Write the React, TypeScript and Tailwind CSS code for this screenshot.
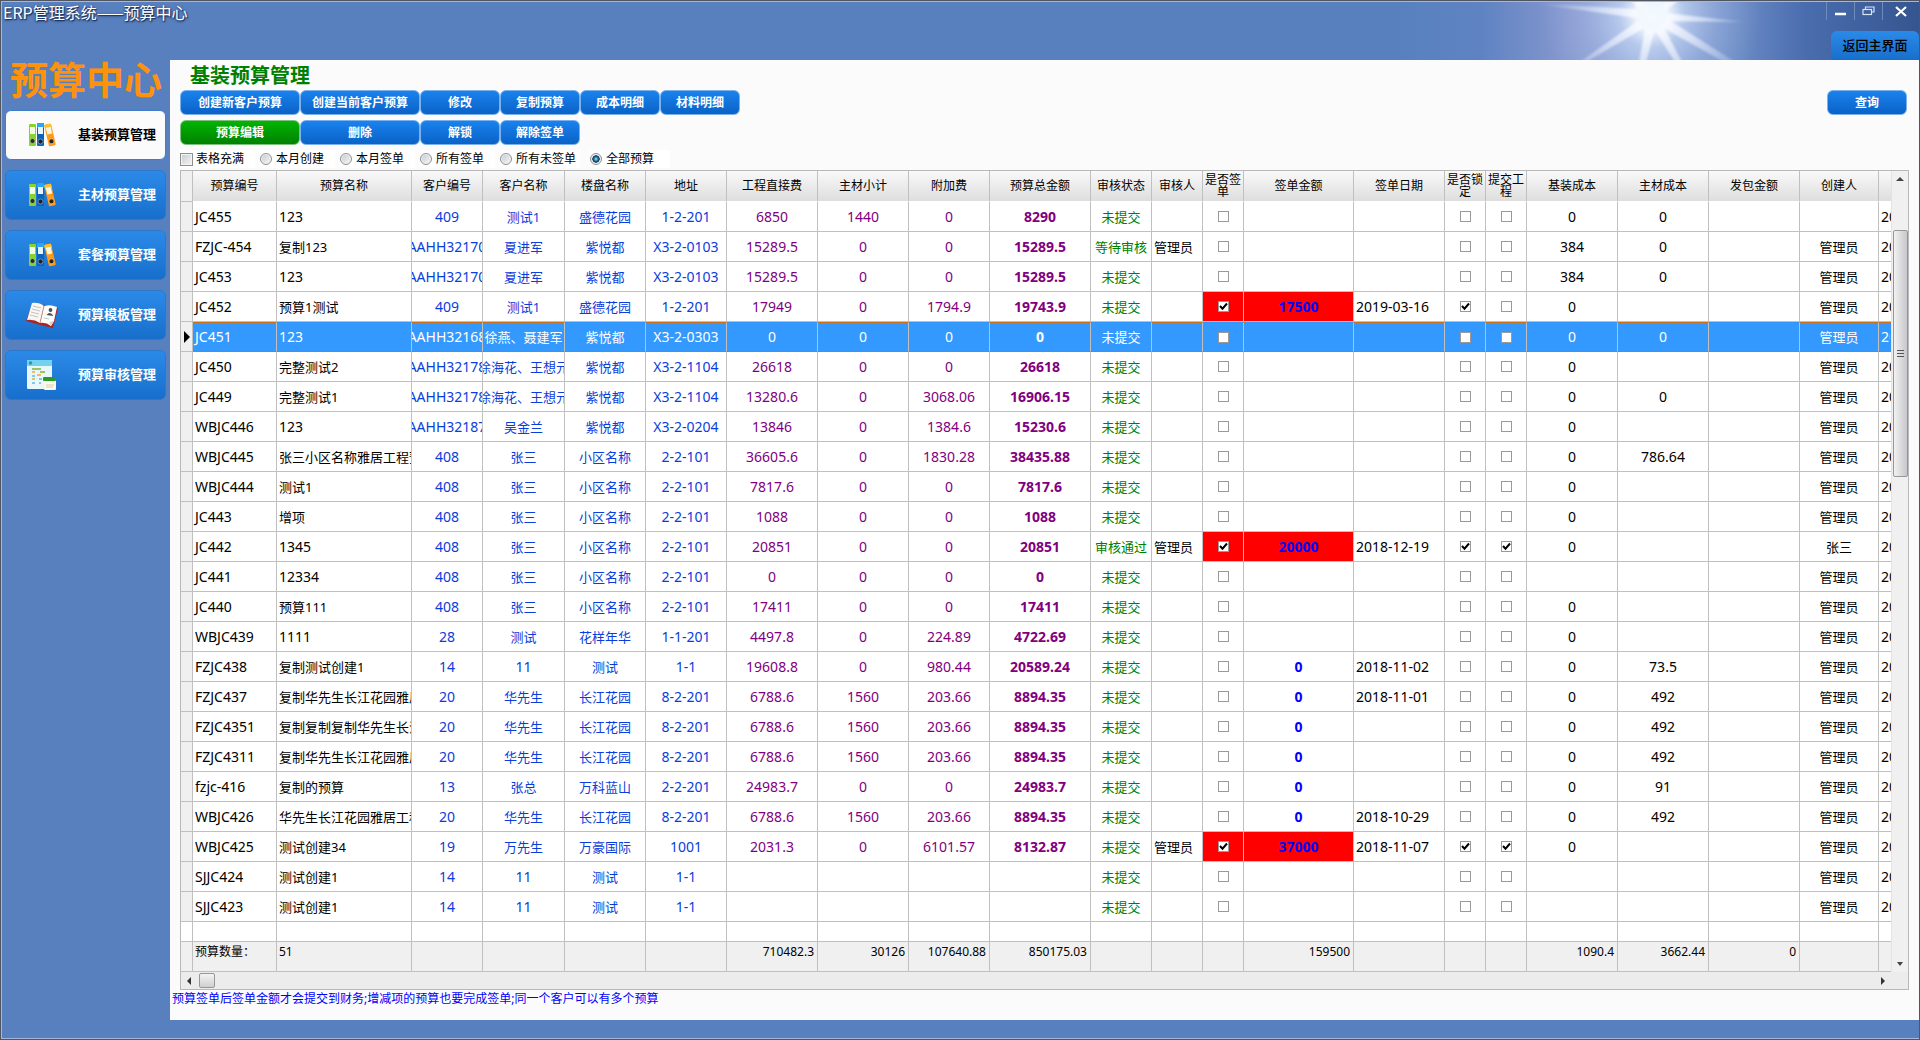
import { useState, type ReactNode } from "react";
import clsx from "clsx";

type Row = {
  id: string;
  name: string;
  customerNo: string;
  customer: string;
  estate: string;
  address: string;
  direct: string;
  material: string;
  extra: string;
  total: string;
  status: string;
  auditor: string;
  signAmount: string;
  signDate: string;
  signed: boolean;
  locked: boolean;
  submitted: boolean;
  baseCost: string;
  materialCost: string;
  creator: string;
};

const LINES = `
JC455|123|409|测试1|盛德花园|1-2-201|6850|1440|0|8290|未提交|||||0|0|
FZJC-454|复制123|AAHH32170|夏进军|紫悦都|X3-2-0103|15289.5|0|0|15289.5|等待审核|管理员||||384|0|管理员
JC453|123|AAHH32170|夏进军|紫悦都|X3-2-0103|15289.5|0|0|15289.5|未提交|||||384|0|管理员
JC452|预算1测试|409|测试1|盛德花园|1-2-201|17949|0|1794.9|19743.9|未提交||17500|2019-03-16|SL|0||管理员
JC451|123|AAHH32168|徐燕、聂建军|紫悦都|X3-2-0303|0|0|0|0|未提交|||||0|0|管理员
JC450|完整测试2|AAHH32178|徐海花、王想元|紫悦都|X3-2-1104|26618|0|0|26618|未提交|||||0||管理员
JC449|完整测试1|AAHH32178|徐海花、王想元|紫悦都|X3-2-1104|13280.6|0|3068.06|16906.15|未提交|||||0|0|管理员
WBJC446|123|AAHH32187|吴金兰|紫悦都|X3-2-0204|13846|0|1384.6|15230.6|未提交|||||0||管理员
WBJC445|张三小区名称雅居工程预算|408|张三|小区名称|2-2-101|36605.6|0|1830.28|38435.88|未提交|||||0|786.64|管理员
WBJC444|测试1|408|张三|小区名称|2-2-101|7817.6|0|0|7817.6|未提交|||||0||管理员
JC443|增项|408|张三|小区名称|2-2-101|1088|0|0|1088|未提交|||||0||管理员
JC442|1345|408|张三|小区名称|2-2-101|20851|0|0|20851|审核通过|管理员|20000|2018-12-19|SLP|0||张三
JC441|12334|408|张三|小区名称|2-2-101|0|0|0|0|未提交|||||||管理员
JC440|预算111|408|张三|小区名称|2-2-101|17411|0|0|17411|未提交|||||0||管理员
WBJC439|1111|28|测试|花样年华|1-1-201|4497.8|0|224.89|4722.69|未提交|||||0||管理员
FZJC438|复制测试创建1|14|11|测试|1-1|19608.8|0|980.44|20589.24|未提交||0|2018-11-02||0|73.5|管理员
FZJC437|复制华先生长江花园雅居|20|华先生|长江花园|8-2-201|6788.6|1560|203.66|8894.35|未提交||0|2018-11-01||0|492|管理员
FZJC4351|复制复制复制华先生长江|20|华先生|长江花园|8-2-201|6788.6|1560|203.66|8894.35|未提交||0|||0|492|管理员
FZJC4311|复制华先生长江花园雅居|20|华先生|长江花园|8-2-201|6788.6|1560|203.66|8894.35|未提交||0|||0|492|管理员
fzjc-416|复制的预算|13|张总|万科蓝山|2-2-201|24983.7|0|0|24983.7|未提交||0|||0|91|管理员
WBJC426|华先生长江花园雅居工程|20|华先生|长江花园|8-2-201|6788.6|1560|203.66|8894.35|未提交||0|2018-10-29||0|492|管理员
WBJC425|测试创建34|19|万先生|万豪国际|1001|2031.3|0|6101.57|8132.87|未提交|管理员|37000|2018-11-07|SLP|0||管理员
SJJC424|测试创建1|14|11|测试|1-1|||||未提交|||||||管理员
SJJC423|测试创建1|14|11|测试|1-1|||||未提交|||||||管理员
`;

const rows: Row[] = LINES.trim().split("\n").map((line) => {
  const f = line.split("|");
  return {
    id: f[0], name: f[1], customerNo: f[2], customer: f[3], estate: f[4], address: f[5],
    direct: f[6], material: f[7], extra: f[8], total: f[9], status: f[10], auditor: f[11],
    signAmount: f[12], signDate: f[13],
    signed: f[14].includes("S"), locked: f[14].includes("L"), submitted: f[14].includes("P"),
    baseCost: f[15], materialCost: f[16], creator: f[17],
  };
});

type Column = {
  key: keyof Row | null;
  title: string;
  width: string;
  tone?: string;
  bold?: boolean;
  left?: boolean;
  sum?: string;
};

const columns: Column[] = [
  { key: "id", title: "预算编号", width: "w-[84px]", left: true, sum: "预算数量：" },
  { key: "name", title: "预算名称", width: "w-[135px]", left: true, sum: "51" },
  { key: "customerNo", title: "客户编号", width: "w-[71px]", tone: "text-[#0a3ddc]" },
  { key: "customer", title: "客户名称", width: "w-[82px]", tone: "text-[#0a3ddc]" },
  { key: "estate", title: "楼盘名称", width: "w-[81px]", tone: "text-[#0a3ddc]" },
  { key: "address", title: "地址", width: "w-[81px]", tone: "text-[#0a3ddc]" },
  { key: "direct", title: "工程直接费", width: "w-[91px]", tone: "text-[#800080]", sum: "710482.3" },
  { key: "material", title: "主材小计", width: "w-[91px]", tone: "text-[#800080]", sum: "30126" },
  { key: "extra", title: "附加费", width: "w-[81px]", tone: "text-[#800080]", sum: "107640.88" },
  { key: "total", title: "预算总金额", width: "w-[101px]", tone: "text-[#800080]", bold: true, sum: "850175.03" },
  { key: "status", title: "审核状态", width: "w-[61px]", tone: "text-[#008000]" },
  { key: "auditor", title: "审核人", width: "w-[51px]", left: true },
  { key: "signed", title: "是否签单", width: "w-[41px]" },
  { key: "signAmount", title: "签单金额", width: "w-[110px]", tone: "text-[#0000ff]", bold: true, sum: "159500" },
  { key: "signDate", title: "签单日期", width: "w-[91px]", left: true },
  { key: "locked", title: "是否锁定", width: "w-[41px]" },
  { key: "submitted", title: "提交工程", width: "w-[41px]" },
  { key: "baseCost", title: "基装成本", width: "w-[91px]", sum: "1090.4" },
  { key: "materialCost", title: "主材成本", width: "w-[91px]", sum: "3662.44" },
  { key: null, title: "发包金额", width: "w-[91px]", sum: "0" },
  { key: "creator", title: "创建人", width: "w-[79px]" },
];

const hasHan = (text: string) => /[\u4e00-\u9fff]/.test(text);

function BinderIcon() {
  return (
    <svg width="30" height="26" viewBox="0 0 30 26" aria-hidden="true">
      <rect x="2" y="2" width="7" height="22" rx="1" fill="#86d32c" />
      <rect x="3" y="5" width="5" height="7" fill="#f3fbe4" />
      <circle cx="5.5" cy="19" r="2.5" fill="#26331c" stroke="#c8e8a0" strokeWidth="0.6" />
      <rect x="10" y="1" width="7" height="23" rx="1" fill="#0d63b5" />
      <rect x="10" y="1" width="7" height="5" rx="1" fill="#2aa7f3" />
      <rect x="11" y="5" width="5" height="7" fill="#e8f4ff" />
      <circle cx="13.5" cy="19.5" r="2.5" fill="#1a222c" stroke="#9cc5ea" strokeWidth="0.6" />
      <g transform="rotate(-13 23 13)">
        <rect x="19.5" y="2" width="7" height="22" rx="1" fill="#ff9a17" />
        <rect x="19.5" y="2" width="7" height="5" rx="1" fill="#ffc12b" />
        <rect x="20.5" y="5" width="5" height="7" fill="#fff4dc" />
        <circle cx="23" cy="19.5" r="2.5" fill="#2b2218" stroke="#ffd79a" strokeWidth="0.6" />
      </g>
    </svg>
  );
}

function BookIcon() {
  return (
    <svg width="34" height="28" viewBox="0 0 34 28" aria-hidden="true">
      <path d="M7 3 L1 20 L15 24 L28 27 L33 7 L20 4 Z" fill="#a92626" />
      <path d="M7 2 Q14 1 19 5 L15 22 Q9 18 2 19 Z" fill="#f8f7f3" />
      <path d="M19 5 Q25 3 32 6 L29 20 L26 25 Q21 21 15 22 Z" fill="#fffefa" />
      <path d="M29 20 L26 25 L24 21 Z" fill="#d9d5cd" />
      <path d="M19 5 L15 22" stroke="#d08a86" strokeWidth="1" />
      <path d="M8 5 L16 7 M7 8 L15 10 M6 11 L14 13 M5 14 L13 16 M19 17 L24 18" stroke="#b5b5b5" strokeWidth="0.8" />
      <circle cx="25.5" cy="9" r="1.9" fill="#4a4f57" />
      <path d="M21.5 14 Q25 9.5 28.5 15 Z" fill="#4a4f57" />
    </svg>
  );
}

function SheetIcon() {
  return (
    <svg width="31" height="32" viewBox="0 0 31 32" aria-hidden="true">
      <rect x="1" y="1" width="25" height="29" rx="1" fill="#e9f7fb" />
      <rect x="1" y="1" width="25" height="6" rx="1" fill="#73d3ef" />
      <circle cx="4.5" cy="4" r="1.8" fill="#2b94ba" />
      <path d="M6 10 H15 M14 13 H19" stroke="#7cb342" strokeWidth="1.3" />
      <path d="M6 13 H9 M11 16 H15 M6 20 H9" stroke="#f0a83a" strokeWidth="1.3" />
      <path d="M6 17 H9 M6 24 H9 M13 20 H16 M13 24 H15" stroke="#57bfe6" strokeWidth="1.3" />
      <rect x="18" y="19" width="12" height="12" rx="1" fill="#fbfaf2" />
      <rect x="17" y="18" width="13" height="4" rx="1" fill="#2a9a26" />
      <path d="M20 26 H28 M20 28 H27" stroke="#e5cf9f" strokeWidth="1" />
    </svg>
  );
}

function SunGlow() {
  return (
    <svg className="absolute top-0 right-0 h-full w-[520px]" viewBox="0 0 520 58" preserveAspectRatio="none" aria-hidden="true">
      <defs>
        <linearGradient id="sky" x1="0" x2="1" y1="0" y2="0">
          <stop offset="0" stopColor="#5880bf" />
          <stop offset="0.16" stopColor="#5f83c2" />
          <stop offset="0.32" stopColor="#8597ce" />
          <stop offset="0.48" stopColor="#96abd9" />
          <stop offset="0.64" stopColor="#6e8dc6" />
          <stop offset="0.78" stopColor="#4a6daf" />
          <stop offset="1" stopColor="#35558f" />
        </linearGradient>
        <radialGradient id="halo" gradientUnits="userSpaceOnUse" cx="253" cy="13" r="110">
          <stop offset="0" stopColor="#f3f8ff" />
          <stop offset="0.16" stopColor="#f0f6ff" stopOpacity="0.9" />
          <stop offset="0.3" stopColor="#cfe0fa" stopOpacity="0.6" />
          <stop offset="0.6" stopColor="#b4c8f0" stopOpacity="0.3" />
          <stop offset="1" stopColor="#a8c0ea" stopOpacity="0" />
        </radialGradient>
        <radialGradient id="ray" gradientUnits="userSpaceOnUse" cx="253" cy="13" r="115">
          <stop offset="0" stopColor="#ffffff" />
          <stop offset="0.35" stopColor="#f2f5ff" stopOpacity="0.7" />
          <stop offset="1" stopColor="#e5ebff" stopOpacity="0" />
        </radialGradient>
        <filter id="soft" x="-10%" y="-20%" width="120%" height="140%">
          <feGaussianBlur stdDeviation="1.2" />
        </filter>
      </defs>
      <rect width="520" height="58" fill="url(#sky)" />
      <rect x="120" width="260" height="58" fill="url(#halo)" />
      <g fill="url(#ray)" filter="url(#soft)">
        <path d="M253 18 L253 8 L130 1 Z" />
        <path d="M250 9 L250 19 L345 20 Z" />
        <path d="M247 13 L257 19 L187 60 L181 60 Z" />
        <path d="M248 16 L259 16 L247 60 L240 60 Z" />
        <path d="M250 19 L260 16 L283 60 L276 60 Z" />
        <path d="M252 19 L259 11 L336 60 L325 60 Z" />
        <path d="M245 14 L256 14 L243 -2 L232 -2 Z" />
        <path d="M250 14 L260 14 L280 -2 L268 -2 Z" />
      </g>
      <circle cx="253" cy="13" r="16" fill="#f2f8ff" opacity="0.8" filter="url(#soft)" />
    </svg>
  );
}

function TitleBar() {
  return (
    <header className="relative flex h-[58px] items-start justify-between">
      <SunGlow />
      <h1 className="relative pl-px font-['Noto_Sans_CJK_SC',sans-serif] text-[16px] leading-5 text-white [text-shadow:0_1px_3px_#1b2f57,1px_1px_1px_#1b2f57]">
        ERP管理系统——预算中心
      </h1>
      <div className="relative flex h-full flex-col items-end justify-between">
        <div className="flex h-[18px] text-white">
          <button type="button" aria-label="最小化" className="flex w-7 items-center justify-center border-l border-[#6f8cbd]">
            <svg width="12" height="12" viewBox="0 0 12 12"><path d="M0 9 H11" stroke="currentColor" strokeWidth="2.5" /></svg>
          </button>
          <button type="button" aria-label="还原" className="flex w-7 items-center justify-center border-l border-[#6f8cbd]">
            <svg width="13" height="10" viewBox="0 0 13 10" fill="none" stroke="#d8e2f3" strokeWidth="1.2">
              <path d="M3.5 3 V1 H12 V6 H10" />
              <rect x="1" y="3.5" width="8.5" height="5" />
            </svg>
          </button>
          <button type="button" aria-label="关闭" className="flex w-[37px] items-center justify-center border-l border-[#6f8cbd]">
            <svg width="12" height="12" viewBox="0 0 12 12"><path d="M1 2 L11 11 M11 2 L1 11" stroke="currentColor" strokeWidth="2.2" /></svg>
          </button>
        </div>
        <button type="button" className="h-[29px] w-[88px] rounded-t-md bg-linear-to-b from-[#2b8ae8] to-[#176fcb] text-[13px] font-medium text-black">
          返回主界面
        </button>
      </div>
    </header>
  );
}

const menu: { label: string; icon: ReactNode }[] = [
  { label: "基装预算管理", icon: <BinderIcon /> },
  { label: "主材预算管理", icon: <BinderIcon /> },
  { label: "套餐预算管理", icon: <BinderIcon /> },
  { label: "预算模板管理", icon: <BookIcon /> },
  { label: "预算审核管理", icon: <SheetIcon /> },
];

function Sidebar() {
  const [active, setActive] = useState(0);

  return (
    <aside className="w-[168px] shrink-0">
      <h2 className="h-[50px] text-center text-[38px] leading-[38px] font-bold text-[#ff920d]">预算中心</h2>
      <nav className="flex flex-col gap-2.5 pr-1 pl-[3px]">
        {menu.map((item, i) => (
          <button
            key={item.label}
            type="button"
            onClick={() => setActive(i)}
            className={clsx(
              "flex h-[50px] items-center justify-between rounded-md border pr-[9px] text-[13px] font-bold whitespace-nowrap",
              i === active
                ? "border-[#3f7dcb] bg-[#fbfbfb] text-black"
                : "border-[#2f78c9] bg-linear-to-b from-[#2b8ae8] to-[#176fcb] text-white"
            )}
          >
            <span className="flex w-[71px] justify-center">{item.icon}</span>
            {item.label}
          </button>
        ))}
      </nav>
    </aside>
  );
}

function ToolButton({ children, wide, green }: { children: ReactNode; wide?: boolean; green?: boolean }) {
  return (
    <button
      type="button"
      className={clsx(
        "h-[25px] shrink-0 rounded-md border text-[12px] leading-5 font-bold text-white",
        wide ? "w-[120px]" : "w-20",
        green
          ? "border-[#7fc27f] bg-linear-to-b from-[#02b502] to-[#018101]"
          : "border-[#7ab0ec] bg-linear-to-b from-[#1a82ee] to-[#0a62c6]"
      )}
    >
      {children}
    </button>
  );
}

const scopes = ["本月创建", "本月签单", "所有签单", "所有未签单", "全部预算"];

function Filters() {
  const [scope, setScope] = useState("全部预算");

  return (
    <div className="flex h-5 items-start gap-[5px] text-[12px] leading-[18px]">
      <label className="flex h-[18px] w-[75px] items-center gap-[3px] bg-white">
        <input
          type="checkbox"
          className="size-[13px] appearance-none border border-[#8e8f8f] bg-linear-to-br from-[#c6cbd0] to-[#f6f6f6] shadow-[inset_0_0_0_1px_#f4f4f4]"
        />
        表格充满
      </label>
      {scopes.map((name, i) => (
        <label
          key={name}
          className={clsx(
            "flex h-[18px] shrink-0 items-center gap-1 bg-white",
            i === 3 ? "mr-[5px] w-20" : i === 4 ? "w-20" : "w-[75px]"
          )}
        >
          <input
            type="radio"
            name="scope"
            checked={scope === name}
            onChange={() => setScope(name)}
            className={clsx(
              "size-3 shrink-0 appearance-none rounded-full border border-[#8e8f8f]",
              scope === name
                ? "bg-[radial-gradient(circle,#5fd0f8_8%,#12466b_40%,#0e2c44_48%,#eef0f2_56%)]"
                : "bg-linear-to-br from-[#c6cbd0] to-[#f6f6f6] shadow-[inset_0_0_0_1px_#f4f4f4]"
            )}
          />
          {name}
        </label>
      ))}
    </div>
  );
}

function GridCheck({ checked, label }: { checked: boolean; label: string }) {
  return (
    <label className="grid place-items-center">
      <input
        type="checkbox"
        checked={checked}
        readOnly
        aria-label={label}
        className="col-start-1 row-start-1 size-[11px] appearance-none border border-[#9a9a9a] bg-white"
      />
      {checked && (
        <svg className="col-start-1 row-start-1" width="9" height="9" viewBox="0 0 9 9" aria-hidden="true">
          <path d="M1 4 L3.5 6.7 L8 1.5" fill="none" stroke="#000" strokeWidth="2" />
        </svg>
      )}
    </label>
  );
}

function Cell({ row, column, selected }: { row: Row; column: Column; selected: boolean }) {
  const value = column.key ? row[column.key] : "";
  const red = row.signed && (column.key === "signed" || column.key === "signAmount");

  return (
    <td
      className={clsx(
        "overflow-hidden border-r border-b p-0",
        selected
          ? "border-t border-y-[#c8701c] border-r-[#c0c0c0] bg-[#3399ff] text-white [border-bottom-style:dotted] [border-top-style:dotted]"
          : "border-[#c0c0c0]",
        red ? "bg-[#ff0000]" : !selected && "bg-white"
      )}
    >
      {typeof value === "boolean" ? (
        <GridCheck checked={value} label={`${row.id} ${column.title}`} />
      ) : (
        <div
          className={clsx(
            "flex leading-5 whitespace-nowrap",
            hasHan(value) ? "text-[13px]" : "text-[14px]",
            column.left ? "pl-0.5" : "justify-center",
            column.bold && "font-bold",
            !selected && column.tone
          )}
        >
          {value}
        </div>
      )}
    </td>
  );
}

function BudgetGrid() {
  const [current, setCurrent] = useState("JC451");

  return (
    <div className="mr-2.5 border border-[#b8b8b8] bg-[#f0f0f0]">
      <div className="flex">
        <div className="min-w-0 flex-1 overflow-hidden">
          <table className="w-full table-fixed border-separate border-spacing-0">
            <colgroup>
              <col className="w-3" />
              {columns.map((c) => (
                <col key={c.title} className={c.width} />
              ))}
              <col />
            </colgroup>
            <thead>
              <tr className="h-[31px]">
                <th className="border-r border-b border-[#c0c0c0] bg-[#f0f0f0] p-0" />
                {columns.map((c) => (
                  <th
                    key={c.title}
                    className="border-r border-b border-r-[#c0c0c0] border-b-white bg-linear-to-b from-[#f9f9f9] to-[#dedede] p-0 text-[12px] leading-3 font-normal"
                  >
                    {c.title}
                  </th>
                ))}
                <th className="border-b border-white bg-linear-to-b from-[#f9f9f9] to-[#dedede] p-0" />
              </tr>
            </thead>
            <tbody>
              {rows.map((row) => {
                const selected = row.id === current;
                return (
                  <tr key={row.id} className="h-[30px]" onClick={() => setCurrent(row.id)}>
                    <td className="border-r border-b border-[#c0c0c0] bg-[#f0f0f0] p-0">
                      {selected && (
                        <svg className="ml-[3px]" width="7" height="12" viewBox="0 0 7 12" aria-hidden="true">
                          <path d="M0 0 L6 6 L0 12 Z" />
                        </svg>
                      )}
                    </td>
                    {columns.map((c) => (
                      <Cell key={c.title} row={row} column={c} selected={selected} />
                    ))}
                    <td
                      className={clsx(
                        "overflow-hidden border-b p-0 pl-0.5 text-[14px] leading-5",
                        selected
                          ? "border-t border-r border-dotted border-[#c8701c] bg-[#3399ff] text-white"
                          : "border-[#c0c0c0] bg-white"
                      )}
                    >
                      20
                    </td>
                  </tr>
                );
              })}
              <tr className="h-5">
                <td className="border-r border-b border-[#c0c0c0] bg-white p-0" />
                {columns.map((c) => (
                  <td key={c.title} className="border-r border-b border-[#c0c0c0] bg-white p-0" />
                ))}
                <td className="border-b border-[#c0c0c0] bg-white p-0" />
              </tr>
            </tbody>
            <tfoot>
              <tr className="h-[30px] text-[12px] leading-5">
                <td className="border-r border-b border-[#c0c0c0] p-0" />
                {columns.map((c) => (
                  <td
                    key={c.title}
                    className={clsx(
                      "border-r border-b border-[#c0c0c0] p-0 align-top whitespace-nowrap",
                      c.left ? "pl-0.5" : "pr-[3px] text-right"
                    )}
                  >
                    {c.sum}
                  </td>
                ))}
                <td className="border-b border-[#c0c0c0] p-0" />
              </tr>
            </tfoot>
          </table>
        </div>
        <div className="flex w-[17px] shrink-0 flex-col items-center border-l border-[#e3e3e3] bg-[#f0f0f0]">
          <svg className="my-[6px]" width="8" height="5" viewBox="0 0 8 5" aria-hidden="true"><path d="M0 4 L4 0 L8 4 Z" fill="#444" /></svg>
          <div className="mt-[42px] flex h-[247px] w-[15px] items-center justify-center rounded-xs border border-[#979797] bg-linear-to-r from-[#f2f2f2] to-[#c6c7cb]">
            <div className="flex w-[7px] flex-col gap-0.5">
              <i className="h-px bg-[#555]" />
              <i className="h-px bg-[#555]" />
              <i className="h-px bg-[#555]" />
            </div>
          </div>
          <svg className="mt-auto mb-[6px]" width="8" height="5" viewBox="0 0 8 5" aria-hidden="true"><path d="M1 1 L7 1 L4 5 Z" fill="#444" /></svg>
        </div>
      </div>
      <div className="flex h-[17px] items-center bg-[#ececec] pr-[23px] pl-1.5">
        <svg width="5" height="8" viewBox="0 0 5 8" aria-hidden="true"><path d="M4 0 L0 4 L4 8 Z" fill="#333" /></svg>
        <div className="ml-[7px] h-[15px] w-4 rounded-xs border border-[#979797] bg-linear-to-b from-[#f4f4f4] to-[#cfcfcf]" />
        <svg className="ml-auto" width="5" height="8" viewBox="0 0 5 8" aria-hidden="true"><path d="M1 0 L5 4 L1 8 Z" fill="#333" /></svg>
      </div>
    </div>
  );
}

export default function App() {
  return (
    <div className="flex min-h-screen flex-col border border-[#505560] bg-[#5880bf] font-['Noto_Sans','Noto_Sans_CJK_SC',sans-serif] text-black">
      <div className="flex flex-1 flex-col border-y border-l border-[#a3b8dd]">
        <TitleBar />
        <div className="flex">
          <Sidebar />
          <main className="min-w-0 flex-1 bg-[#fbfbfb] pb-3">
            <div className="pl-2.5">
              <h2 className="pt-0.5 pl-2.5 text-[20px] leading-7 font-bold text-[#008000]">基装预算管理</h2>
              <div className="flex pr-3">
                <ToolButton wide>创建新客户预算</ToolButton>
                <ToolButton wide>创建当前客户预算</ToolButton>
                <ToolButton>修改</ToolButton>
                <ToolButton>复制预算</ToolButton>
                <ToolButton>成本明细</ToolButton>
                <ToolButton>材料明细</ToolButton>
                <div className="ml-auto flex">
                  <ToolButton>查询</ToolButton>
                </div>
              </div>
              <div className="mt-[5px] mb-[5px] flex">
                <ToolButton wide green>预算编辑</ToolButton>
                <ToolButton wide>删除</ToolButton>
                <ToolButton>解锁</ToolButton>
                <ToolButton>解除签单</ToolButton>
              </div>
              <Filters />
              <BudgetGrid />
            </div>
            <p className="pl-0.5 text-[12px] leading-[18px] text-[#0000ff]">
              预算签单后签单金额才会提交到财务;增减项的预算也要完成签单;同一个客户可以有多个预算
            </p>
          </main>
        </div>
      </div>
    </div>
  );
}
